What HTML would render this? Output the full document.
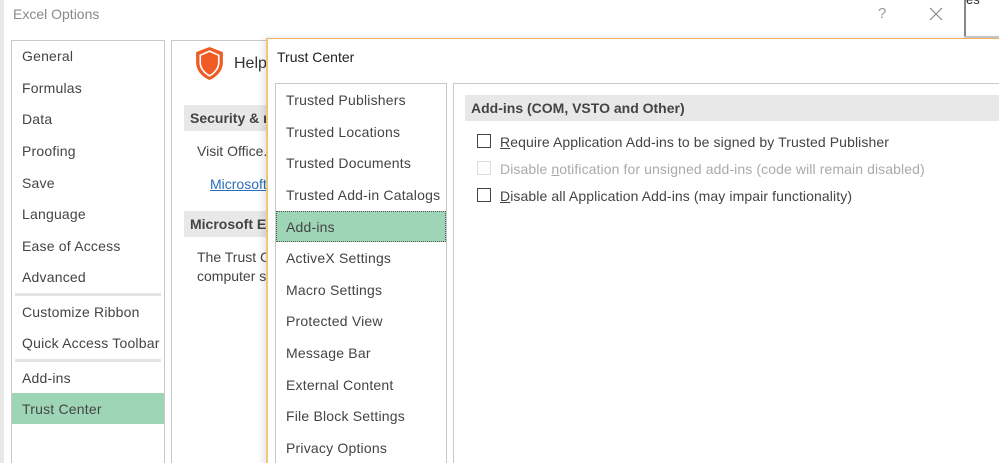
<!DOCTYPE html>
<html><head><style>
*{margin:0;padding:0;box-sizing:border-box}
html,body{width:999px;height:463px;overflow:hidden}
body{background:#fff;font-family:"Liberation Sans",sans-serif;font-size:14px;color:#444;position:relative}
.a{position:absolute;white-space:nowrap}
.box{position:absolute;border:1px solid #c8c8c8;background:#fff}
.it{position:absolute;font-size:14px;color:#444;letter-spacing:0.2px}
.bar{position:absolute;background:#e8e8e8;font-weight:bold;color:#444;padding-left:6px;line-height:26px;font-size:14px}
.cb{position:absolute;width:14px;height:14px;border:1px solid #444;background:#fff}
</style></head><body>
<div class="a" style="left:0;top:0;width:4px;height:463px;background:#e8e8e8"></div>
<div class="a" style="left:964px;top:0;width:35px;height:38px;background:#fff;border-left:2px solid #888"></div>
<div class="a" style="left:964px;top:36px;width:35px;height:2px;background:#ccc"></div>
<div class="a" style="left:966px;top:-8px;font-size:13px;color:#222">es</div>
<div class="a" style="left:13px;top:6px;font-size:14px;color:#888">Excel Options</div>
<div class="a" style="left:878px;top:5px;font-size:15px;color:#999">?</div>
<svg class="a" style="left:929px;top:7px" width="14" height="14"><path d="M1 1L13 13M13 1L1 13" stroke="#888" stroke-width="1.2"/></svg>

<div class="box" style="left:11px;top:40px;width:154px;height:430px"></div>
<div class="a" style="left:12px;top:393px;width:152px;height:31px;background:#9fd5b7"></div>
<div class="a" style="left:15px;top:293px;width:146px;height:3px;background:#e4e4e4"></div>
<div class="a" style="left:15px;top:359px;width:146px;height:3px;background:#e4e4e4"></div>
<div class="it" style="left:22px;top:48px">General</div>
<div class="it" style="left:22px;top:80px">Formulas</div>
<div class="it" style="left:22px;top:111px">Data</div>
<div class="it" style="left:22px;top:143px">Proofing</div>
<div class="it" style="left:22px;top:175px">Save</div>
<div class="it" style="left:22px;top:206px">Language</div>
<div class="it" style="left:22px;top:238px">Ease of Access</div>
<div class="it" style="left:22px;top:269px">Advanced</div>
<div class="it" style="left:22px;top:304px">Customize Ribbon</div>
<div class="it" style="left:22px;top:335px">Quick Access Toolbar</div>
<div class="it" style="left:22px;top:370px">Add-ins</div>
<div class="it" style="left:22px;top:401px">Trust Center</div>

<div class="box" style="left:171px;top:40px;width:120px;height:430px"></div>
<svg class="a" style="left:195px;top:46px" width="29" height="35" viewBox="0 0 28 34"><path d="M14 1L27 6V16C27 24 21 30 14 33C7 30 1 24 1 16V6Z" fill="#f05a24"/><path d="M14 5L23 9V16C23 22 19 26 14 29C9 26 5 22 5 16V9Z" fill="none" stroke="#fff" stroke-width="1.6"/></svg>
<div class="a" style="left:234px;top:55px;font-size:16px;color:#333">Help</div>
<div class="bar" style="left:184px;top:105px;width:100px">Security &amp; m</div>
<div class="a" style="left:197px;top:143px">Visit Office.</div>
<div class="a" style="left:210px;top:176px;color:#2a6ebb;text-decoration:underline">Microsoft</div>
<div class="bar" style="left:184px;top:211px;width:100px">Microsoft Ex</div>
<div class="a" style="left:197px;top:249px">The Trust Ce</div>
<div class="a" style="left:197px;top:268px">computer se</div>

<div class="a" style="left:266px;top:38px;width:740px;height:430px;background:#fff;border-left:2px solid #f0c77a;border-top:1px solid #f0b060;box-shadow:-3px 0 6px rgba(0,0,0,.1)"></div>
<div class="a" style="left:277px;top:49px;font-size:14px;color:#222">Trust Center</div>
<div class="box" style="left:275px;top:83px;width:172px;height:390px"></div>
<div class="a" style="left:276px;top:211px;width:170px;height:31px;background:#9fd5b7;border:1px dotted #555"></div>
<div class="it" style="left:286px;top:92px">Trusted Publishers</div>
<div class="it" style="left:286px;top:124px">Trusted Locations</div>
<div class="it" style="left:286px;top:155px">Trusted Documents</div>
<div class="it" style="left:286px;top:187px">Trusted Add-in Catalogs</div>
<div class="it" style="left:286px;top:219px">Add-ins</div>
<div class="it" style="left:286px;top:250px">ActiveX Settings</div>
<div class="it" style="left:286px;top:282px">Macro Settings</div>
<div class="it" style="left:286px;top:313px">Protected View</div>
<div class="it" style="left:286px;top:345px">Message Bar</div>
<div class="it" style="left:286px;top:377px">External Content</div>
<div class="it" style="left:286px;top:408px">File Block Settings</div>
<div class="it" style="left:286px;top:440px">Privacy Options</div>

<div class="box" style="left:453px;top:83px;width:560px;height:390px"></div>
<div class="bar" style="left:465px;top:95px;width:540px">Add-ins (COM, VSTO and Other)</div>
<div class="cb" style="left:477px;top:134px"></div>
<div class="a" style="left:500px;top:134px;letter-spacing:0.1px"><u>R</u>equire Application Add-ins to be signed by Trusted Publisher</div>
<div class="cb" style="left:477px;top:161px;border-color:#ddd"></div>
<div class="a" style="left:500px;top:161px;color:#aaa;letter-spacing:0.1px">Disable <u>n</u>otification for unsigned add-ins (code will remain disabled)</div>
<div class="cb" style="left:477px;top:188px"></div>
<div class="a" style="left:500px;top:188px;letter-spacing:0.1px"><u>D</u>isable all Application Add-ins (may impair functionality)</div>
</body></html>
